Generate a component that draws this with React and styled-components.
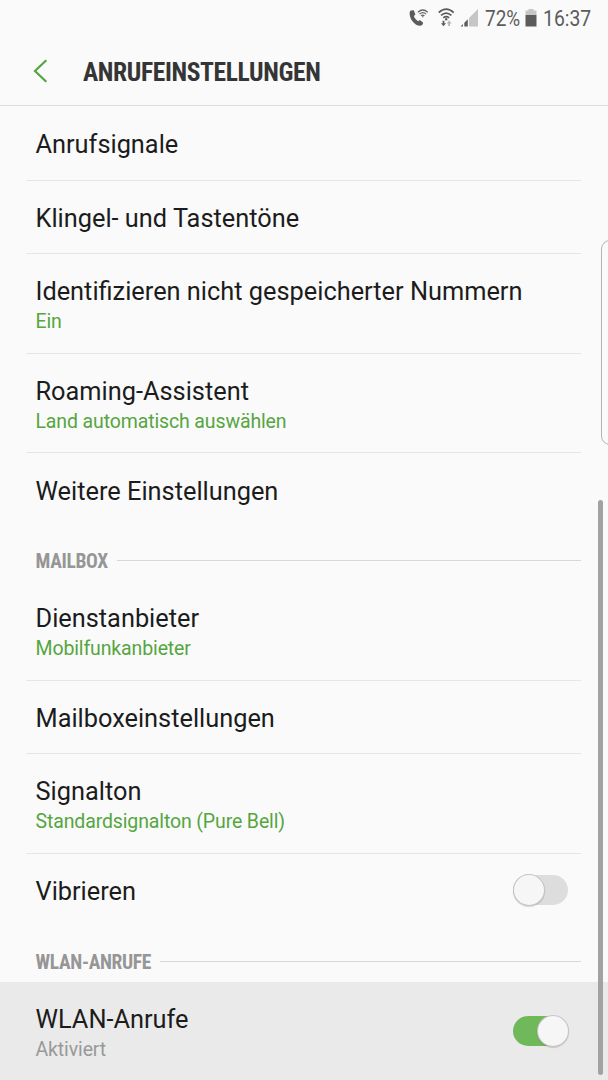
import { Component } from 'react';
import styled, { createGlobalStyle } from 'styled-components';

const GlobalStyle = createGlobalStyle`
  * {
    box-sizing: border-box;
  }
  body {
    margin: 0;
    background: #fafafa;
    font-family: Roboto, 'Liberation Sans', sans-serif;
    color: #1c1c1c;
  }
`;

const Screen = styled('div')`
  position: relative;
  width: 608px;
  height: 1080px;
  overflow: hidden;
  background: #fafafa;
`;

const StatusBar = styled('div')`
  display: flex;
  align-items: center;
  height: 38px;
  padding-left: 409px;
  font-size: 22px;
  line-height: 38px;
  color: #5c5c5c;
`;
const StatusIcons = styled('svg')`
  flex: none;
  width: ${(props) => props.$width}px;
  height: 38px;
`;
const Narrow = styled('span')`
  flex: none;
  width: ${(props) => props.$width}px;
  white-space: nowrap;
  transform: scaleX(${(props) => props.$scale});
  transform-origin: left center;
`;

const Header = styled('header')`
  display: flex;
  align-items: center;
  height: 68px;
  margin-bottom: 1px;
  padding-left: 33px;
  border-bottom: 1px solid #dcdcdc;
`;
const BackIcon = styled('svg')`
  width: 16px;
  height: 24px;
  margin: -1px 34px 0 0;
`;
const PageTitle = styled('h1')`
  margin: 0;
  font-family: 'Roboto Condensed', Roboto, sans-serif;
  font-stretch: 75%;
  font-size: 25.5px;
  line-height: 30px;
  letter-spacing: -0.37px;
  font-weight: 700;
  color: #353535;
  white-space: nowrap;
`;

const Row = styled('div')`
  height: ${(props) => (props.$tall ? 99.6 : 73.5)}px;
  padding: 0 27px 0 26px;
  background: ${(props) => (props.$pressed ? '#eaeaea' : 'transparent')};
`;
const RowInner = styled('div')`
  display: flex;
  justify-content: space-between;
  align-items: center;
  height: 100%;
  padding: 0 13px 0 9.5px;
  border-bottom: 1px solid ${(props) => (props.$divider ? '#e6e6e6' : 'transparent')};
`;
const RowText = styled('div')`
  padding-top: ${(props) => (props.$tall ? 4.8 : 2.4)}px;
`;
const Label = styled('div')`
  font-size: 25.35px;
  line-height: 30px;
  font-weight: 380;
  white-space: nowrap;
`;
const Value = styled('div')`
  margin-top: 3px;
  font-size: 19.5px;
  line-height: 26px;
  letter-spacing: -0.13px;
  font-weight: 380;
  color: ${(props) => (props.$muted ? '#999999' : '#55a63f')};
`;

const Section = styled('div')`
  display: flex;
  align-items: center;
  height: 54.4px;
  padding: 14px 27px 0 35.5px;
`;
const SectionTitle = styled('h2')`
  margin: 3px 9px 0 0;
  font-family: 'Roboto Condensed', Roboto, sans-serif;
  font-stretch: 75%;
  font-size: 19.5px;
  line-height: 26px;
  letter-spacing: -0.32px;
  font-weight: 700;
  color: #969696;
  white-space: nowrap;
`;
const SectionLine = styled('div')`
  flex: 1;
  height: 1px;
  background: #d8d8d8;
`;

const Track = styled('div')`
  display: flex;
  align-items: center;
  justify-content: ${(props) => (props.$on ? 'flex-end' : 'flex-start')};
  width: 55px;
  height: 30px;
  padding-left: 1px;
  border-radius: 15px;
  background: ${(props) => (props.$on ? '#6fb95a' : '#dddddd')};
`;
const Knob = styled('div')`
  flex: none;
  width: 30px;
  height: 30px;
  border-radius: 50%;
  background: #f6f6f6;
  box-shadow: 0 0 0 1px #c3c6c3, 0 1px 1px 1px rgba(0, 0, 0, 0.15);
`;

const EdgeHandle = styled('div')`
  position: absolute;
  top: 240px;
  left: 601px;
  width: 20px;
  height: 205px;
  border: 1px solid #b4b4b4;
  border-radius: 9px;
`;
const ScrollThumb = styled('div')`
  position: absolute;
  top: 500px;
  left: 598px;
  width: 5px;
  height: 575px;
  border-radius: 3px;
  background: #a1a3a3;
`;

const callRows = [
  { label: 'Anrufsignale', divider: true },
  { label: 'Klingel- und Tastentöne', divider: true },
  { label: 'Identifizieren nicht gespeicherter Nummern', value: 'Ein', divider: true },
  { label: 'Roaming-Assistent', value: 'Land automatisch auswählen', divider: true },
  { label: 'Weitere Einstellungen' },
];
const mailboxRows = [
  { label: 'Dienstanbieter', value: 'Mobilfunkanbieter', divider: true },
  { label: 'Mailboxeinstellungen', divider: true },
  { label: 'Signalton', value: 'Standardsignalton (Pure Bell)', divider: true },
  { label: 'Vibrieren', toggle: 'off' },
];
const wlanRows = [
  { label: 'WLAN-Anrufe', value: 'Aktiviert', muted: true, pressed: true, toggle: 'on' },
];

const Toggle = ({ on }) => (
  <Track $on={on} role="switch" aria-checked={on}>
    <Knob />
  </Track>
);

const SettingRow = ({ item }) => (
  <Row $tall={!!item.value} $pressed={item.pressed}>
    <RowInner $divider={item.divider}>
      <RowText $tall={!!item.value}>
        <Label>{item.label}</Label>
        {item.value && <Value $muted={item.muted}>{item.value}</Value>}
      </RowText>
      {item.toggle && <Toggle on={item.toggle === 'on'} />}
    </RowInner>
  </Row>
);

const SectionHeader = ({ title }) => (
  <Section>
    <SectionTitle>{title}</SectionTitle>
    <SectionLine />
  </Section>
);

const Indicators = () => (
  <StatusIcons $width={76} viewBox="0 0 76 38" fill="none">
    {/* wifi call */}
    <path
      d="M1.8 10.6 L4.8 10.2 L6.4 14.4 L4.9 16 C5.6 18.3 7.2 20.2 9.3 21.2 L11 20.1 L14.2 22.8 L13.4 24.8 C12.2 26.2 9.4 26 6.8 24.5 C3 22 0.8 17.8 0.6 13.8 C0.6 12.3 1 11.3 1.8 10.6Z"
      fill="#5c5c5c"
    />
    <path
      d="M8.9 12.2 Q13.8 7.8 18.7 12.2 M10.5 14.1 Q13.8 11.2 17.1 14.1 M12.1 15.9 Q13.8 14.5 15.5 15.9"
      stroke="#666666"
      strokeWidth="1.2"
    />
    <circle cx="13.8" cy="16.8" r="0.7" fill="#666666" />
    {/* wifi */}
    <path
      d="M29.7 12.6 Q37.2 5.6 44.7 12.6 M32 15.4 Q37.2 10.8 42.4 15.4 M34.3 17.9 Q37.2 15.5 40.1 17.9"
      stroke="#5c5c5c"
      strokeWidth="1.7"
    />
    <circle cx="37.2" cy="19.2" r="1.2" fill="#5c5c5c" />
    <path d="M33.6 20.8 H35.4 V23.3 H37 L34.5 26.3 L32 23.3 H33.6Z" fill="#5c5c5c" />
    <path d="M39.2 26 H41 V23.5 H42.6 L40.1 20.5 L37.6 23.5 H39.2Z" fill="#b5b5b5" />
    {/* mobile signal */}
    <path d="M60 26.5 V18 L69 9 V26.5Z" fill="#c6c6c6" />
    <path d="M51.5 26.5 L54 24 V26.5Z M55.3 26.5 V22.7 L58.8 19.2 V26.5Z" fill="#5c5c5c" />
  </StatusIcons>
);

class App extends Component {
  render() {
    return (
      <Screen>
        <GlobalStyle />
        <StatusBar>
          <Indicators />
          <Narrow $width={40} $scale={0.86}>
            72%
          </Narrow>
          <StatusIcons $width={18} viewBox="0 0 18 38">
            <path d="M3.5 9 H8.5 V10.5 H11.5 V15 H0.5 V10.5 H3.5Z" fill="#c6c6c6" />
            <path d="M0.5 15 H11.5 V26.5 H0.5Z" fill="#5c5c5c" />
          </StatusIcons>
          <Narrow $width={50} $scale={0.88}>
            16:37
          </Narrow>
        </StatusBar>
        <Header>
          <BackIcon viewBox="0 0 16 24" fill="none">
            <path d="M13.3 1.2 L2 12 L13.3 22.8" stroke="#55a63f" strokeWidth="2.2" />
          </BackIcon>
          <PageTitle>ANRUFEINSTELLUNGEN</PageTitle>
        </Header>
        {callRows.map((item) => (
          <SettingRow key={item.label} item={item} />
        ))}
        <SectionHeader title="MAILBOX" />
        {mailboxRows.map((item) => (
          <SettingRow key={item.label} item={item} />
        ))}
        <SectionHeader title="WLAN-ANRUFE" />
        {wlanRows.map((item) => (
          <SettingRow key={item.label} item={item} />
        ))}
        <EdgeHandle />
        <ScrollThumb />
      </Screen>
    );
  }
}

export default App;
